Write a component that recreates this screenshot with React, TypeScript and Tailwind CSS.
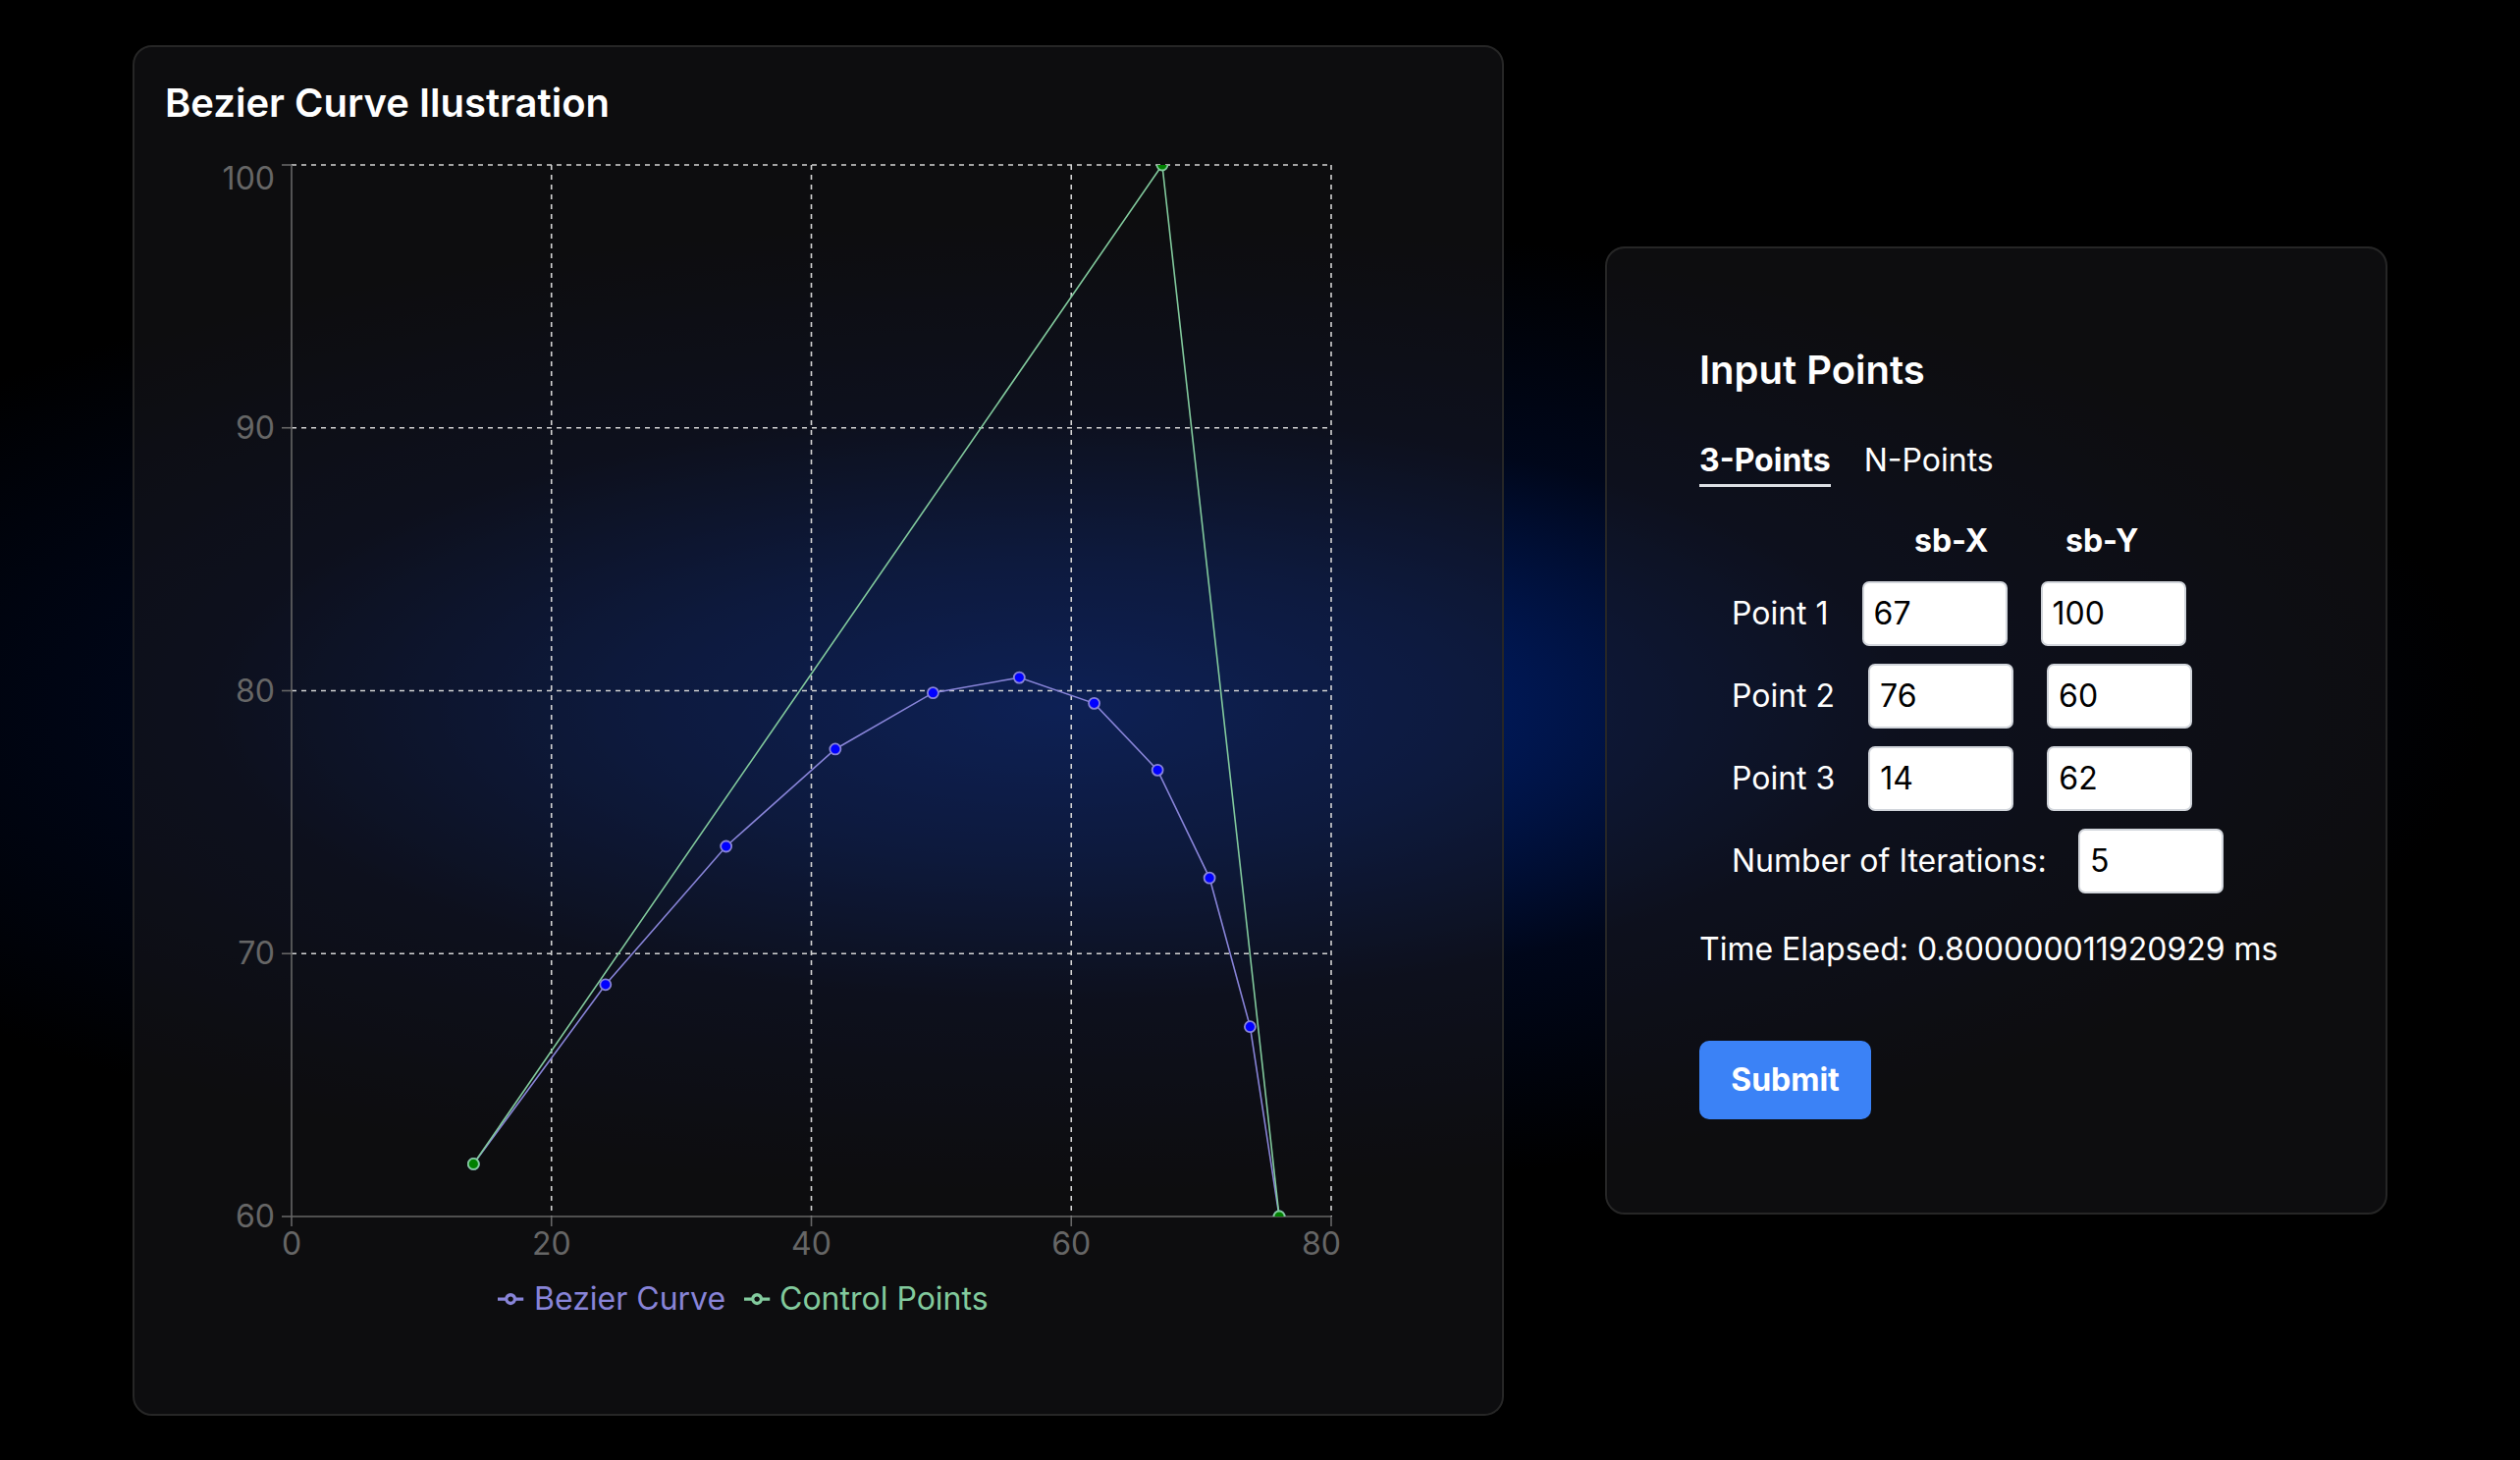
import React from 'react';

// plot frame inside the chart svg (svg origin sits at page 167,140)
const X0 = 129;
const X1 = 1188;
const Y0 = 28;
const Y1 = 1099;
const sx = (v: number) => X0 + (v / 80) * (X1 - X0);
const sy = (v: number) => Y1 - ((v - 60) / 40) * (Y1 - Y0);

const controlPoints = [
  { x: 14, y: 62 },
  { x: 67, y: 100 },
  { x: 76, y: 60 },
];

// quadratic bezier sampled at t = 0, 0.1, ... 1
const curvePoints = Array.from({ length: 11 }, (_, i) => {
  const t = i / 10;
  const [a, b, c] = controlPoints;
  return {
    x: (1 - t) * (1 - t) * a.x + 2 * (1 - t) * t * b.x + t * t * c.x,
    y: (1 - t) * (1 - t) * a.y + 2 * (1 - t) * t * b.y + t * t * c.y,
  };
});

const toPath = (pts: { x: number; y: number }[]) =>
  pts.map((p, i) => `${i === 0 ? 'M' : 'L'}${sx(p.x)},${sy(p.y)}`).join(' ');

const LegendIcon = ({ x, y, color }: { x: number; y: number; color: string }) => (
  <g transform={`translate(${x},${y - 13}) scale(0.82)`}>
    <path
      d="M0,16h10.67 A5.33,5.33,0,1,1,21.33,16 H32 M21.33,16 A5.33,5.33,0,1,1,10.67,16"
      fill="none"
      stroke={color}
      strokeWidth={4}
    />
  </g>
);

const BezierChart = () => {
  const yTicks = [60, 70, 80, 90, 100];
  const xTicks = [0, 20, 40, 60, 80];
  const gridStyle = { stroke: '#d4d4d4', strokeWidth: 1.6, strokeDasharray: '5 5' };

  return (
    <svg width={1331} height={1230} className="mt-[9px] block" style={{ fontFamily: 'Inter, sans-serif' }}>
      <defs>
        <clipPath id="plot-area">
          <rect x={X0} y={Y0} width={X1 - X0} height={Y1 - Y0} />
        </clipPath>
      </defs>

      {/* grid */}
      {yTicks.slice(1).map((v) => (
        <line key={`h${v}`} x1={X0} x2={X1} y1={sy(v)} y2={sy(v)} {...gridStyle} />
      ))}
      {xTicks.slice(1).map((v) => (
        <line key={`v${v}`} x1={sx(v)} x2={sx(v)} y1={Y0} y2={Y1} {...gridStyle} />
      ))}

      {/* axes */}
      <line x1={X0} x2={X0} y1={Y0} y2={Y1} stroke="#666" strokeWidth={1.6} />
      <line x1={X0} x2={X1} y1={Y1} y2={Y1} stroke="#666" strokeWidth={1.6} />
      {yTicks.map((v) => (
        <g key={`yt${v}`}>
          <line x1={X0 - 10} x2={X0} y1={sy(v)} y2={sy(v)} stroke="#666" strokeWidth={1.6} />
          <text x={112} y={v === 100 ? sy(v) + 25 : sy(v) + 11} textAnchor="end" fill="#666" fontSize={32}>
            {v}
          </text>
        </g>
      ))}
      {xTicks.map((v) => (
        <g key={`xt${v}`}>
          <line x1={sx(v)} x2={sx(v)} y1={Y1} y2={Y1 + 10} stroke="#666" strokeWidth={1.6} />
          <text x={v === 80 ? sx(v) - 10 : sx(v)} y={1138} textAnchor="middle" fill="#666" fontSize={32}>
            {v}
          </text>
        </g>
      ))}

      {/* series */}
      <g clipPath="url(#plot-area)">
        <path d={toPath(curvePoints)} fill="none" stroke="#8884d8" strokeWidth={1.6} />
        {curvePoints.map((p, i) => (
          <circle key={`c${i}`} cx={sx(p.x)} cy={sy(p.y)} r={5.5} fill="#0000ff" stroke="#8884d8" strokeWidth={1.8} />
        ))}
        <path d={toPath(controlPoints)} fill="none" stroke="#82ca9d" strokeWidth={1.6} />
        {controlPoints.map((p, i) => (
          <circle key={`p${i}`} cx={sx(p.x)} cy={sy(p.y)} r={5.5} fill="#008000" stroke="#82ca9d" strokeWidth={1.8} />
        ))}
      </g>

      {/* legend */}
      <LegendIcon x={339} y={1183} color="#8884d8" />
      <text x={376} y={1194} fill="#8884d8" fontSize={32}>Bezier Curve</text>
      <LegendIcon x={590} y={1183} color="#82ca9d" />
      <text x={626} y={1194} fill="#82ca9d" fontSize={32}>Control Points</text>
    </svg>
  );
};

const inputClass =
  'h-[66px] w-[148px] shrink-0 rounded-[7px] border-2 border-[#d1d5db] bg-white pl-[10px] text-[32px] text-black outline-none';

const PointRow = ({ label, x, y }: { label: string; x: string; y: string }) => (
  <div className="flex items-center gap-[34px] pl-[33px]">
    <span className="whitespace-nowrap text-[32px] leading-[40px] text-white">{label}</span>
    <input defaultValue={x} className={inputClass} />
    <input defaultValue={y} className={inputClass} />
  </div>
);

export default function App() {
  return (
    <div className="relative flex min-h-screen w-full items-center justify-center gap-[103px] overflow-hidden bg-black font-['Inter','Noto_Sans',sans-serif]">
      {/* blue glow behind the cards */}
      <div className="pointer-events-none absolute inset-0 bg-[radial-gradient(ellipse_1450px_500px_at_1080px_720px,rgba(0,36,128,1)_0%,rgba(0,28,100,0.85)_30%,rgba(0,15,58,0.45)_60%,transparent_100%)]" />

      {/* Chart card */}
      <div className="relative z-10 flex h-[1396px] w-[1397px] flex-col rounded-[20px] border-2 border-[#262626] bg-[rgba(29,29,33,0.45)] p-[31px]">
        <h2 className="text-[40px] font-semibold leading-[52px] text-white">Bezier Curve Ilustration</h2>
        <BezierChart />
      </div>

      {/* Input card */}
      <div className="relative z-10 flex h-[986px] w-[797px] flex-col rounded-[20px] border-2 border-[#262626] bg-[rgba(29,29,33,0.45)] pl-[94px] pt-[98px]">
        <h2 className="text-[40px] font-semibold leading-[52px] text-white">Input Points</h2>

        <div className="mt-[46px] flex items-start gap-[34px] text-[32px] leading-[40px] text-white">
          <span className="border-b-[3px] border-[#dcdfe4] pb-[4px] font-bold">3-Points</span>
          <span>N-Points</span>
        </div>

        <div className="mt-[35px] flex pl-[219px] text-[32px] font-bold leading-[40px] text-white">
          <span className="w-[154px]">sb-X</span>
          <span>sb-Y</span>
        </div>

        <div className="mt-[21px] flex flex-col gap-[18px]">
          <PointRow label="Point 1" x="67" y="100" />
          <PointRow label="Point 2" x="76" y="60" />
          <PointRow label="Point 3" x="14" y="62" />
          <div className="flex items-center gap-[34px] pl-[33px]">
            <span className="w-[319px] shrink-0 whitespace-nowrap text-[32px] leading-[40px] text-white">
              Number of Iterations:
            </span>
            <input defaultValue="5" className={inputClass} />
          </div>
        </div>

        <p className="mt-[37px] whitespace-nowrap text-[32px] leading-[40px] text-white">
          Time Elapsed: 0.800000011920929 ms
        </p>

        <button className="mt-[73px] h-[80px] w-[175px] rounded-[10px] bg-[#3b82f6] text-[32px] font-bold text-white">
          Submit
        </button>
      </div>
    </div>
  );
}
